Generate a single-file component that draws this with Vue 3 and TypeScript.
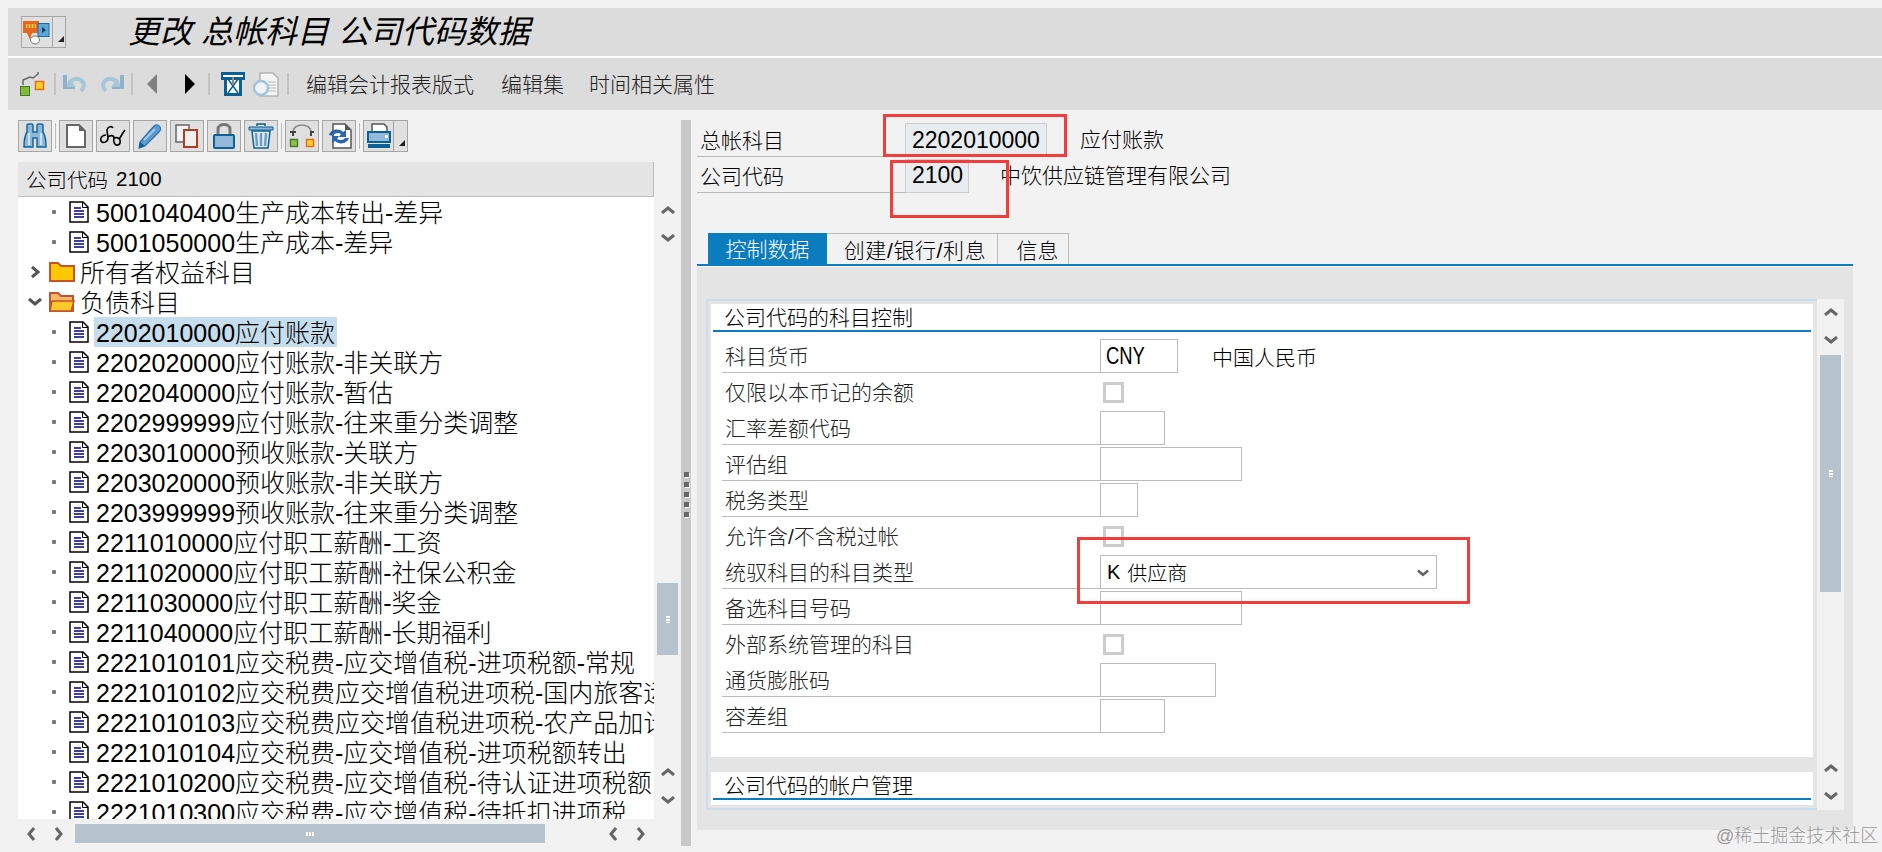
<script setup lang="ts">
interface TreeRow { kind: 'leaf' | 'closed' | 'open'; code?: string; name: string; active?: boolean }
interface FormRow { label: string; kind: 'input' | 'check' | 'select'; width?: number; value?: string; note?: string }

const leaf = (code: string, name: string, active = false): TreeRow => ({ kind: 'leaf', code, name, active })

const tree: TreeRow[] = [
  leaf('5001040400', '生产成本转出-差异'),
  leaf('5001050000', '生产成本-差异'),
  { kind: 'closed', name: '所有者权益科目' },
  { kind: 'open', name: '负债科目' },
  leaf('2202010000', '应付账款', true),
  leaf('2202020000', '应付账款-非关联方'),
  leaf('2202040000', '应付账款-暂估'),
  leaf('2202999999', '应付账款-往来重分类调整'),
  leaf('2203010000', '预收账款-关联方'),
  leaf('2203020000', '预收账款-非关联方'),
  leaf('2203999999', '预收账款-往来重分类调整'),
  leaf('2211010000', '应付职工薪酬-工资'),
  leaf('2211020000', '应付职工薪酬-社保公积金'),
  leaf('2211030000', '应付职工薪酬-奖金'),
  leaf('2211040000', '应付职工薪酬-长期福利'),
  leaf('2221010101', '应交税费-应交增值税-进项税额-常规'),
  leaf('2221010102', '应交税费应交增值税进项税-国内旅客运输'),
  leaf('2221010103', '应交税费应交增值税进项税-农产品加计扣除'),
  leaf('2221010104', '应交税费-应交增值税-进项税额转出'),
  leaf('2221010200', '应交税费-应交增值税-待认证进项税额'),
  leaf('2221010300', '应交税费-应交增值税-待抵扣进项税'),
]

const form: FormRow[] = [
  { label: '科目货币', kind: 'input', width: 78, value: 'CNY', note: '中国人民币' },
  { label: '仅限以本币记的余额', kind: 'check' },
  { label: '汇率差额代码', kind: 'input', width: 65 },
  { label: '评估组', kind: 'input', width: 142 },
  { label: '税务类型', kind: 'input', width: 38 },
  { label: '允许含/不含税过帐', kind: 'check' },
  { label: '统驭科目的科目类型', kind: 'select', width: 337 },
  { label: '备选科目号码', kind: 'input', width: 142 },
  { label: '外部系统管理的科目', kind: 'check' },
  { label: '通货膨胀码', kind: 'input', width: 116 },
  { label: '容差组', kind: 'input', width: 65 },
]
</script>

<template>
  <div class="page">
    <header class="titlebar">
      <div class="title-btn">
        <svg class="title-icon" width="28" height="26" viewBox="0 0 28 26">
          <path d="M0 2H16V14H9L7 21L4 14H0Z" fill="#e8661c" />
          <path d="M3 5H13V9H3Z" fill="#ffd24a" />
          <path d="M4 6H12M4 8H12" stroke="#c8401a" stroke-dasharray="2 1" />
          <rect x="15" y="4.500" width="11" height="13" fill="#5da5d8" stroke="#1c6ca6" />
          <path d="M19 8L23 11L19 14Z" fill="#0c3f66" />
          <ellipse cx="12" cy="21" rx="4.500" ry="4" fill="#fff" stroke="#777" />
        </svg>
        <span class="title-drop"><i class="corner"></i></span>
      </div>
      <h1 class="title">更改 总帐科目 公司代码数据</h1>
    </header>

    <nav class="toolbar">
      <svg class="t-connect" width="25" height="24" viewBox="0 0 25 24">
        <path d="M3 13V8L10 5L13 6L18 2V0" fill="none" stroke="#666" stroke-width="1.500" />
        <rect x="0.500" y="14.500" width="9" height="9" fill="#86b83c" stroke="#3d7a24" />
        <rect x="15.500" y="9.500" width="8" height="8" fill="#ffcf26" stroke="#e0701c" stroke-width="1.500" />
      </svg>
      <i class="t-sep s1"></i>
      <svg class="t-undo" width="25" height="20" viewBox="0 0 25 20">
        <path d="M3 11H9L7 8C10 4 16 4 19 7C22 10 21 14 18 17" fill="none" stroke="#a6c6da" stroke-width="4" />
        <path d="M0 1H4V13H12V15H0Z" fill="#8fb3ca" />
      </svg>
      <svg class="t-redo" width="25" height="20" viewBox="0 0 25 20">
        <path d="M22 11H16L18 8C15 4 9 4 6 7C3 10 4 14 7 17" fill="none" stroke="#a6c6da" stroke-width="4" />
        <path d="M25 1H21V13H13V15H25Z" fill="#8fb3ca" />
      </svg>
      <i class="t-sep s2"></i>
      <svg class="t-back" width="10" height="20" viewBox="0 0 10 20"><path d="M10 0V20L0 10Z" fill="#808080" /></svg>
      <svg class="t-fwd" width="10" height="20" viewBox="0 0 10 20"><path d="M0 0V20L10 10Z" fill="#000" /></svg>
      <i class="t-sep s3"></i>
      <svg class="t-hour" width="24" height="24" viewBox="0 0 24 24">
        <path d="M0 0H24V8H21V24H3V8H0Z" fill="#0b5f92" />
        <path d="M2 3H22V5H2Z" fill="#fff" />
        <path d="M6 8H18V21H6Z" fill="#fff" />
        <path d="M7 7L12 14L7 21M17 7L12 14L17 21" fill="none" stroke="#0b5f92" stroke-width="1.500" />
        <path d="M11 5H13V13H11Z" fill="#888" />
      </svg>
      <svg class="t-look" width="27" height="25" viewBox="0 0 27 25">
        <path d="M8 1H21L26 6V24H8Z" fill="#f4f4f4" stroke="#b4b4b4" stroke-width="1.500" />
        <path d="M16 10H24M16 13H24M16 16H24M16 19H24" stroke="#b8b8b8" />
        <circle cx="9" cy="16" r="7" fill="#eef4f8" stroke="#a3c4da" stroke-width="2.500" />
      </svg>
      <i class="t-sep s4"></i>
      <a class="menu m1">编辑会计报表版式</a>
      <a class="menu m2">编辑集</a>
      <a class="menu m3">时间相关属性</a>
    </nav>

    <main class="main">
      <section class="left">
        <div class="btnrow">
          <button class="btn">
            <svg width="24" height="26" viewBox="0 0 24 26">
              <path d="M4 2C4 1 5 1 6 1H9C10 1 10 2 10 3V9H14V3C14 2 14 1 15 1H18C19 1 20 1 20 2V9C22 12 23 18 23 24H14V15H10V24H1C1 18 2 12 4 9Z" fill="#8fb7d9" stroke="#14679c" stroke-width="1.500" />
              <path d="M6 10V22M18 10V22" stroke="#cfe0ef" stroke-width="2" />
            </svg>
          </button>
          <i class="vsep"></i>
          <button class="btn">
            <svg width="20" height="24" viewBox="0 0 20 24">
              <path d="M1 1H13L19 7V23H1Z" fill="#fff" stroke="#666" stroke-width="2" />
              <path d="M13 1V7H19Z" fill="#666" />
            </svg>
          </button>
          <button class="btn">
            <svg width="26" height="22" viewBox="0 0 26 22">
              <path d="M6 10C2 10 0 13 1 16C3 19 8 17 8 13C8 10 7 8 7 5C8 1 12 1 13 3M8 12C10 10 14 10 14 13C13 17 15 21 18 20C21 19 21 14 18 13C16 12 14 13 14 14M19 14C21 12 23 7 25 5" fill="none" stroke="#000" stroke-width="1.600" />
            </svg>
          </button>
          <button class="btn">
            <svg width="24" height="26" viewBox="0 0 24 26">
              <path d="M2 19L16 3C18 1 21 2 22 4C23 6 22 8 21 9L7 23L1 25Z" fill="#5b9bd0" stroke="#2b74ab" stroke-width="1.200" />
              <path d="M1 25L2 19L7 23Z" fill="#0d5c90" />
              <path d="M6 17L17 6" stroke="#a9cbe6" stroke-width="2" />
            </svg>
          </button>
          <button class="btn">
            <svg width="24" height="24" viewBox="0 0 24 24">
              <path d="M1 1H14V18H1Z" fill="#f4f4f4" stroke="#666" stroke-width="1.500" />
              <path d="M9 6H22V23H9Z" fill="#f0f0f0" stroke="#b43a22" stroke-width="2" />
            </svg>
          </button>
          <button class="btn">
            <svg width="22" height="26" viewBox="0 0 22 26">
              <path d="M5 12V6C5 0 17 0 17 6V12" fill="none" stroke="#777" stroke-width="3" />
              <rect x="1" y="12" width="20" height="13" rx="1" fill="#93b8da" stroke="#0c6092" stroke-width="2" />
            </svg>
          </button>
          <button class="btn">
            <svg width="26" height="26" viewBox="0 0 26 26">
              <path d="M9 3V1H17V3" fill="none" stroke="#0c6092" stroke-width="1.500" />
              <path d="M1 4H25V7H1Z" fill="#8fb7d9" stroke="#0c6092" />
              <path d="M4 8H22L20 25H6Z" fill="#dfe9f2" stroke="#0c6092" stroke-width="1.500" />
              <path d="M8 10L9 23M13 10V23M18 10L17 23" stroke="#6e9dc4" stroke-width="2.400" />
            </svg>
          </button>
          <i class="vsep"></i>
          <button class="btn">
            <svg width="26" height="24" viewBox="0 0 26 24">
              <path d="M4 8C4 3 9 1 13 1C17 1 22 3 22 8" fill="none" stroke="#888" stroke-width="1.500" />
              <path d="M1 8H7M21 8H25M4 7V12M22 7V12" stroke="#444" stroke-width="2" />
              <rect x="1.500" y="15.500" width="7" height="7" fill="#8fc33c" stroke="#4a7a38" stroke-width="1.500" />
              <rect x="17.500" y="15.500" width="7" height="7" fill="#ffcf26" stroke="#e0701c" stroke-width="1.500" />
            </svg>
          </button>
          <button class="btn">
            <svg width="26" height="26" viewBox="0 0 26 26">
              <path d="M7 1H19L25 7V25H7Z" fill="#fff" stroke="#555" stroke-width="1.500" />
              <path d="M19 1V7H25Z" fill="#555" />
              <path d="M3 12C5 6 13 5 17 9L20 7V14H13L15 11C12 9 8 10 7 13ZM23 15C21 21 13 22 9 18L6 20V13H13L11 16C14 18 18 17 19 15Z" fill="#2a66ad" />
            </svg>
          </button>
          <i class="vsep"></i>
          <button class="btn btn-wide">
            <span class="btn-main">
              <svg width="24" height="26" viewBox="0 0 24 26">
                <path d="M5 1H17L20 4V9H5Z" fill="#fff" stroke="#555" stroke-width="1.500" />
                <rect x="1" y="9" width="22" height="10" fill="#93b8da" stroke="#0c6092" stroke-width="2" />
                <rect x="18" y="12" width="3" height="3" fill="#fff" />
                <rect x="1" y="21" width="22" height="4" fill="#0c6092" />
              </svg>
            </span>
            <span class="title-drop small"><i class="corner"></i></span>
          </button>
        </div>

        <div class="tree-head"><span>公司代码</span><span class="tree-head-no">2100</span></div>

        <div class="tree-wrap">
          <div class="tree">
            <div v-for="row in tree" :key="row.name" class="tree-row" :class="row.kind">
              <template v-if="row.kind === 'leaf'">
                <i class="bullet"></i>
                <svg class="doc" width="20" height="22" viewBox="0 0 20 22">
                  <path d="M1 1H14L19 6V21H1Z" fill="#fff" stroke="#000" stroke-width="1.500" />
                  <path d="M13.500 1V6.500H19" fill="none" stroke="#000" />
                  <path d="M5 7H12M5 10H15M5 13H15M5 16H15" stroke="#00007f" stroke-width="1.600" />
                </svg>
                <span class="leaf-text" :class="{ active: row.active }"><span class="code">{{ row.code }}</span>{{ row.name }}</span>
              </template>
              <template v-else>
                <svg class="expander" width="14" height="14" viewBox="0 0 14 14">
                  <path v-if="row.kind === 'closed'" d="M4 2L10 7L4 12" fill="none" stroke="#555" stroke-width="3" />
                  <path v-else d="M1 4L7 9L13 4" fill="none" stroke="#555" stroke-width="3" />
                </svg>
                <svg class="folder" width="26" height="20" viewBox="0 0 26 20">
                  <template v-if="row.kind === 'closed'">
                    <path d="M1 1H9L12 4H25V19H1Z" fill="#ffc800" stroke="#c4532c" stroke-width="2" />
                  </template>
                  <template v-else>
                    <path d="M1 1H9L12 4H24V19H1Z" fill="#f5b86a" stroke="#c4532c" stroke-width="2" />
                    <path d="M3 9H25L22 19H1Z" fill="#ffc82a" stroke="#c4532c" stroke-width="1.500" />
                  </template>
                </svg>
                <span class="folder-text">{{ row.name }}</span>
              </template>
            </div>
          </div>
          <div class="vbar">
            <svg class="chev first" width="14" height="8" viewBox="0 0 14 8"><path d="M1 7L7 2L13 7" /></svg>
            <svg class="chev" width="14" height="8" viewBox="0 0 14 8"><path d="M1 1L7 6L13 1" /></svg>
            <div class="thumb left-thumb"><i class="grip"></i></div>
            <svg class="chev last" width="14" height="8" viewBox="0 0 14 8"><path d="M1 7L7 2L13 7" /></svg>
            <svg class="chev" width="14" height="8" viewBox="0 0 14 8"><path d="M1 1L7 6L13 1" /></svg>
          </div>
        </div>

        <div class="hbar">
          <svg class="hchev" width="8" height="14" viewBox="0 0 8 14"><path d="M7 1L2 7L7 13" /></svg>
          <svg class="hchev" width="8" height="14" viewBox="0 0 8 14"><path d="M1 1L6 7L1 13" /></svg>
          <div class="hthumb"><i class="hgrip"></i></div>
          <svg class="hchev" width="8" height="14" viewBox="0 0 8 14"><path d="M7 1L2 7L7 13" /></svg>
          <svg class="hchev" width="8" height="14" viewBox="0 0 8 14"><path d="M1 1L6 7L1 13" /></svg>
        </div>
      </section>

      <div class="splitter">
        <i></i><i></i><i></i><i></i><i></i>
      </div>

      <section class="right">
        <div class="hdr-row">
          <span class="hdr-label">总帐科目</span>
          <span class="hdr-field wide">2202010000</span>
          <span class="hdr-note n1">应付账款</span>
        </div>
        <div class="hdr-row">
          <span class="hdr-label">公司代码</span>
          <span class="hdr-field narrow">2100</span>
          <span class="hdr-note n2">中饮供应链管理有限公司</span>
        </div>

        <div class="tabs">
          <span class="tab on">控制数据</span>
          <span class="tab t2">创建/银行/利息</span>
          <span class="tab t3">信息</span>
        </div>

        <div class="panel">
          <div class="frame">
            <div class="frame-body">
              <div class="group g1">
                <div class="group-title">公司代码的科目控制</div>
                <div class="form">
                  <div v-for="row in form" :key="row.label" class="form-row">
                    <span class="form-label" :class="{ plain: row.kind === 'check' }">{{ row.label }}</span>
                    <i v-if="row.kind === 'check'" class="check"></i>
                    <span v-else-if="row.kind === 'input'" class="input" :style="{ width: row.width + 'px' }"><span class="input-val">{{ row.value }}</span></span>
                    <span v-else class="input select" :style="{ width: row.width + 'px' }">
                      <span class="sel-k">K</span><span class="sel-v">供应商</span>
                      <svg class="sel-chev" width="12" height="8" viewBox="0 0 14 8"><path d="M1 1L7 6L13 1" /></svg>
                    </span>
                    <span v-if="row.note" class="form-note">{{ row.note }}</span>
                  </div>
                </div>
              </div>
              <div class="group g2">
                <div class="group-title">公司代码的帐户管理</div>
              </div>
            </div>
            <div class="vbar fbar">
              <svg class="chev first" width="14" height="8" viewBox="0 0 14 8"><path d="M1 7L7 2L13 7" /></svg>
              <svg class="chev" width="14" height="8" viewBox="0 0 14 8"><path d="M1 1L7 6L13 1" /></svg>
              <div class="thumb right-thumb"><i class="grip"></i></div>
              <svg class="chev last" width="14" height="8" viewBox="0 0 14 8"><path d="M1 7L7 2L13 7" /></svg>
              <svg class="chev" width="14" height="8" viewBox="0 0 14 8"><path d="M1 1L7 6L13 1" /></svg>
            </div>
          </div>
        </div>
      </section>
    </main>

    <i class="mark mark-a"></i>
    <i class="mark mark-b"></i>
    <i class="mark mark-c"></i>
    <span class="watermark">@稀土掘金技术社区</span>
  </div>
</template>

<style scoped>
.page {
  position: relative;
  width: 1882px;
  height: 852px;
  box-sizing: border-box;
  padding-top: 8px;
  overflow: hidden;
  background: #f2f2f2;
  color: #000;
  font-family: "Liberation Sans", "Noto Sans CJK SC", sans-serif;
  font-size: 21px;
  font-weight: 300;
}
i { display: block; font-style: normal; }

.titlebar {
  display: flex;
  align-items: center;
  height: 48px;
  margin-left: 8px;
  padding-left: 13px;
  background: #dcdcdc;
}
.title-btn {
  display: flex;
  width: 45px;
  height: 32px;
  box-sizing: border-box;
  border: 1px solid #a6a6a6;
  background: #e0e0e0;
}
.title-icon { flex: none; margin: 2px 0 0 1px; }
.title-drop {
  position: relative;
  display: block;
  flex: none;
  width: 14px;
  margin-left: 1px;
  border-left: 1px solid #a6a6a6;
}
.title-drop.small { width: 14px; margin-left: 0; }
.corner {
  position: absolute;
  right: 3px;
  bottom: 5px;
  width: 0;
  height: 0;
  border-style: solid;
  border-width: 0 0 6px 6px;
  border-color: transparent transparent #222 transparent;
}
.title {
  margin: 0 0 0 62px;
  font-size: 32px;
  font-weight: 400;
  font-style: italic;
  line-height: 40px;
  white-space: nowrap;
}

.toolbar {
  display: flex;
  align-items: center;
  height: 52px;
  margin-left: 8px;
  padding-left: 12px;
  border-top: 2px solid #fff;
  background: #dcdcdc;
}
.toolbar svg { flex: none; }
.t-sep { flex: none; width: 2px; height: 22px; background: #c4c4c4; }
.s1 { margin-left: 9px; }
.t-undo { margin-left: 7px; }
.t-redo { margin-left: 11px; }
.s2 { margin-left: 7px; }
.t-back { margin-left: 14px; }
.t-fwd { margin-left: 28px; }
.s3 { margin-left: 13px; }
.t-hour { margin-left: 11px; }
.t-look { margin-left: 7px; }
.s4 { margin-left: 8px; }
.menu { margin-top: -2px; font-size: 21px; color: #222; white-space: nowrap; }
.m1 { margin-left: 17px; }
.m2 { margin-left: 27px; }
.m3 { margin-left: 25px; }

.main {
  display: flex;
  height: 726px;
  margin-top: 10px;
}

.left {
  flex: none;
  width: 681px;
  box-sizing: border-box;
  padding-left: 18px;
}
.btnrow { display: flex; gap: 3px; height: 32px; }
.btn {
  display: flex;
  flex: none;
  align-items: center;
  justify-content: center;
  width: 34px;
  height: 32px;
  padding: 0;
  box-sizing: border-box;
  border: 1px solid #a6a6a6;
  background: #e0e0e0;
}
.btn-wide { width: 45px; justify-content: flex-start; align-items: stretch; }
.btn-main { display: flex; flex: none; width: 29px; align-items: center; justify-content: center; }
.vsep { flex: none; width: 1px; height: 26px; margin-top: 3px; background: #bbb; }

.tree-head {
  display: flex;
  align-items: center;
  gap: 8px;
  width: 636px;
  height: 35px;
  margin-top: 10px;
  padding-left: 8px;
  box-sizing: border-box;
  border-right: 1px solid #bbb;
  border-bottom: 1px solid #bbb;
  background: #e5e5e5;
  font-size: 20.500px;
}
.tree-wrap { display: flex; height: 622px; }
.tree {
  flex: none;
  width: 636px;
  overflow: hidden;
  background: #fff;
}
.tree-row {
  display: flex;
  align-items: center;
  height: 30px;
  font-size: 25px;
  white-space: nowrap;
}
.bullet { flex: none; width: 4px; height: 4px; margin-left: 34px; background: #777; border-radius: 1px; }
.doc { flex: none; margin-left: 13px; }
.leaf-text { margin-left: 5px; padding: 3px 2px 0; line-height: 27px; }
.leaf-text.active { background: #c5dded; }
.expander { flex: none; margin-left: 10px; }
.folder { flex: none; margin-left: 7px; }
.folder-text { margin: -2px 0 0 5px; }

.vbar {
  display: flex;
  flex: none;
  flex-direction: column;
  align-items: center;
  width: 27px;
  background: #f2f2f2;
}
.chev { flex: none; margin-top: 20px; }
.chev.first { margin-top: 9px; }
.chev path, .hchev path, .sel-chev path { fill: none; stroke: #666; stroke-width: 3; }
.thumb {
  display: flex;
  flex: none;
  align-items: center;
  justify-content: center;
  width: 21px;
  background: #b6c2cc;
}
.left-thumb { height: 72px; margin-top: 341px; }
.chev.last { margin-top: 113px; }
.grip {
  width: 4px;
  height: 7px;
  background: repeating-linear-gradient(#fff 0 2px, transparent 2px 3px);
}
.fbar .chev.first { margin-top: 9px; }
.right-thumb { height: 237px; margin-top: 11px; }
.fbar .chev.last { margin-top: 172px; }

.hbar { display: flex; align-items: center; height: 19px; margin: 5px 0 0 -1px; }
.hchev { flex: none; margin: 0 10px; }
.hthumb {
  display: flex;
  flex: none;
  align-items: center;
  justify-content: center;
  width: 470px;
  height: 19px;
  margin: 0 54px 0 2px;
  background: #b6c2cc;
}
.hgrip {
  width: 8px;
  height: 4px;
  background: repeating-linear-gradient(90deg, #fff 0 2px, transparent 2px 3px);
}

.splitter {
  display: flex;
  flex: none;
  flex-direction: column;
  align-items: center;
  justify-content: center;
  gap: 5px;
  width: 10px;
  box-sizing: border-box;
  padding-top: 22px;
  background: #c8c8c8;
}
.splitter i { width: 5px; height: 5px; background: #666; box-shadow: 1px 1px 0 #fff; }

.right { flex: 1; min-width: 0; padding-left: 6px; }
.hdr-row { display: flex; align-items: flex-end; height: 36px; }
.hdr-row:first-child { height: 37px; }
.hdr-label {
  flex: none;
  width: 208px;
  height: 36px;
  padding-left: 3px;
  box-sizing: border-box;
  border-bottom: 1px solid #bbb;
  line-height: 39px;
}
.hdr-field {
  flex: none;
  height: 34px;
  padding-left: 6px;
  box-sizing: border-box;
  border: 1px solid #ccc;
  background: #e8ecef;
  font-size: 23px;
  line-height: 33px;
}
.hdr-field.narrow { line-height: 31px; }
.hdr-field.wide { width: 142px; }
.hdr-field.narrow { width: 64px; }
.hdr-note { line-height: 34px; }
.n1 { margin-left: 33px; }
.n2 { margin-left: 31px; }

.tabs { display: flex; height: 31px; margin: 40px 0 0 11px; }
.tab {
  flex: none;
  height: 31px;
  box-sizing: border-box;
  border: 1px solid #bbb;
  border-bottom: 0;
  border-left: 0;
  text-align: center;
  line-height: 33px;
  white-space: nowrap;
}
.tab.on { width: 119px; border: 0; background: #0b7dbe; color: #fff; }
.t2 { width: 171px; padding-left: 6px; letter-spacing: 0.600px; }
.t3 { width: 71px; padding-left: 9px; }

.panel {
  width: 1156px;
  height: 566px;
  box-sizing: border-box;
  margin-top: 0;
  padding: 33px 9px 22px;
  border-top: 2px solid #0b7dbe;
  background: #e4e4e4;
  box-shadow: inset 0 1px 0 #fff;
}
.frame { display: flex; height: 511px; }
.frame-body {
  flex: none;
  width: 1111px;
  box-sizing: border-box;
  padding: 3px 4px 3px 3px;
  border-top: 2px solid #cddcec;
  border-bottom: 2px solid #cddcec;
  border-left: 2px solid #cddcec;
}
.group { background: #fff; }
.g1 { height: 453px; }
.g2 { height: 33px; margin-top: 15px; }
.group-title {
  height: 26px;
  margin: 0 2px;
  padding-left: 11px;
  border-bottom: 2px solid #0b7dbe;
  line-height: 28px;
}
.form { padding: 5px 0 0 11px; }
.form-row { display: flex; align-items: flex-end; height: 36px; }
.form-label {
  flex: none;
  width: 378px;
  height: 36px;
  padding-left: 3px;
  box-sizing: border-box;
  border-bottom: 1px solid #bbb;
  color: #222;
  line-height: 40px;
}
.form-label.plain { border-bottom: 0; }
.input {
  display: flex;
  flex: none;
  align-items: center;
  height: 34px;
  padding-left: 5px;
  box-sizing: border-box;
  border: 1px solid #bbb;
  background: #fff;
}
.input-val {
  display: inline-block;
  font-size: 23px;
  transform: scaleX(0.8);
  transform-origin: left center;
}
.select { position: relative; font-size: 20px; }
.sel-k { margin-left: 1px; }
.sel-v { margin-left: 7px; }
.sel-chev { position: absolute; right: 7px; top: 13px; }
.check {
  flex: none;
  width: 21px;
  height: 21px;
  box-sizing: border-box;
  margin: 0 0 6px 3px;
  border: 3px solid #ccc;
  background: #fff;
}
.form-note { margin-left: 34px; align-self: center; margin-top: 2px; }

.mark { position: absolute; box-sizing: border-box; border: 3px solid #f33c3c; }
.mark-a { left: 883px; top: 114px; width: 184px; height: 43px; }
.mark-b { left: 890px; top: 160px; width: 119px; height: 58px; }
.mark-c { left: 1077px; top: 537px; width: 393px; height: 67px; }
.watermark {
  position: absolute;
  left: 1716px;
  top: 825px;
  font-size: 18px;
  line-height: 22px;
  color: #999;
  white-space: nowrap;
}
</style>
